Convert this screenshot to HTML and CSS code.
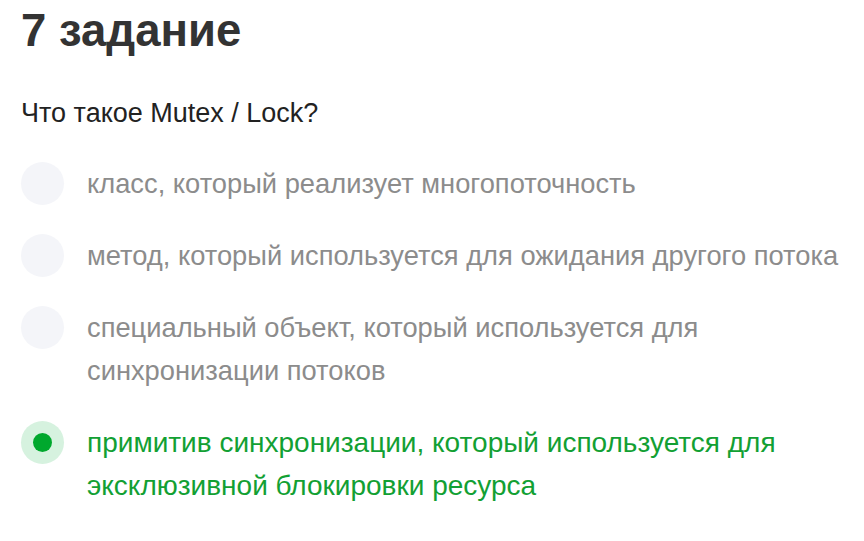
FILE: index.html
```html
<!DOCTYPE html>
<html lang="ru">
<head>
<meta charset="utf-8">
<link rel="stylesheet" href="styles.css">
</head>
<body>
<div class="task">
  <h1 class="title">7 задание</h1>
  <p class="question">Что такое Mutex / Lock?</p>
  <ul class="options">
    <li class="option"><span class="radio"></span><span class="label">класс, который реализует многопоточность</span></li>
    <li class="option"><span class="radio"></span><span class="label">метод, который используется для ожидания другого потока</span></li>
    <li class="option"><span class="radio"></span><span class="label">специальный объект, который используется для синхронизации потоков</span></li>
    <li class="option selected"><span class="radio"><span class="dot"></span></span><span class="label">примитив синхронизации, который используется для эксклюзивной блокировки ресурса</span></li>
  </ul>
</div>
</body>
</html>
```
FILE: styles.css
```css
html, body {
  margin: 0;
  padding: 0;
  background: #ffffff;
}
body {
  font-family: "Liberation Sans", Arial, sans-serif;
}
.task {
  padding: 3px 21px 0 21px;
}
.title {
  margin: 0;
  font-size: 45.5px;
  font-weight: 700;
  line-height: 56px;
  color: #333333;
}
.question {
  margin: 36px 0 0 0;
  font-size: 27px;
  line-height: 36px;
  color: #222222;
}
.options {
  list-style: none;
  margin: 31px 0 0 0;
  padding: 0;
  display: flex;
  flex-direction: column;
  gap: 29px;
}
.option {
  display: flex;
  align-items: flex-start;
  gap: 23px;
}
.radio {
  flex: none;
  width: 43px;
  height: 43px;
  border-radius: 50%;
  background: #f4f5f9;
  display: flex;
  align-items: center;
  justify-content: center;
}
.label {
  font-size: 27.3px;
  line-height: 43px;
  color: #8c8c8c;
}
.selected .radio {
  background: #d6f2df;
}
.selected .dot {
  width: 19px;
  height: 19px;
  border-radius: 50%;
  background: #00a82d;
}
.selected .label {
  font-size: 28px;
  color: #12a033;
}
```
